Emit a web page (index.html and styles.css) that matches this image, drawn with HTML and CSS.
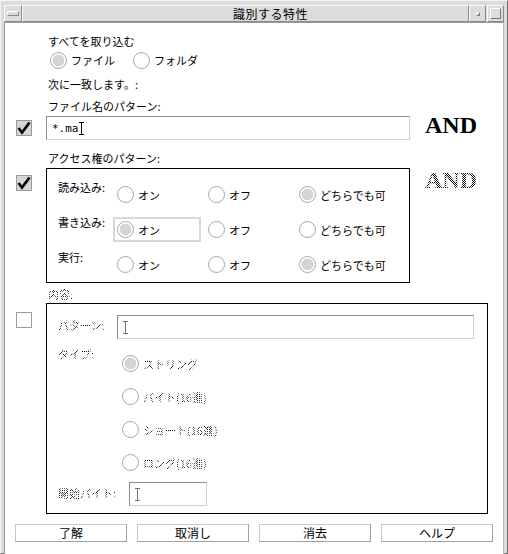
FILE: index.html
```html
<!DOCTYPE html>
<html lang="ja">
<head>
    <meta charset="UTF-8">
    <title>識別する特性</title>
    <link rel="stylesheet" href="styles.css">
</head>
<body>
    <div class="window">

        <!-- title bar -->
        <div class="titlebar">
            <div class="tb-btn menu-btn"><span class="menu-bar"></span></div>
            <div class="title">識別する特性</div>
            <div class="tb-btn min-btn"><span class="min-dot"></span></div>
            <div class="tb-btn max-btn"><span class="max-box"></span></div>
        </div>

        <div class="client">

            <div class="lbl first">すべてを取り込む</div>
            <div class="top-radios">
                <span class="opt wide"><span class="radio on"></span>ファイル</span>
                <span class="opt"><span class="radio"></span>フォルダ</span>
            </div>
            <div class="lbl gap7">次に一致します。:</div>
            <div class="lbl gap6">ファイル名のパターン:</div>

            <!-- file name pattern -->
            <div class="line name-line">
                <div class="gutter"><span class="check on"></span></div>
                <div class="field name-field">*.ma<span class="ibeam"></span></div>
                <span class="and">AND</span>
            </div>

            <div class="lbl gap10">アクセス権のパターン:</div>

            <!-- access rights -->
            <div class="line access-line">
                <div class="gutter"><span class="check on"></span></div>
                <div class="box access-box">
                    <div class="arow">
                        <div class="alabel">読み込み:</div>
                        <span class="cell"><span class="radio"></span>オン</span>
                        <span class="cell"><span class="radio"></span>オフ</span>
                        <span class="cell"><span class="radio on"></span>どちらでも可</span>
                    </div>
                    <div class="arow">
                        <div class="alabel">書き込み:</div>
                        <span class="cell focus"><span class="radio on"></span>オン</span>
                        <span class="cell"><span class="radio"></span>オフ</span>
                        <span class="cell"><span class="radio"></span>どちらでも可</span>
                    </div>
                    <div class="arow">
                        <div class="alabel">実行:</div>
                        <span class="cell"><span class="radio"></span>オン</span>
                        <span class="cell"><span class="radio"></span>オフ</span>
                        <span class="cell"><span class="radio on"></span>どちらでも可</span>
                    </div>
                </div>
                <span class="and dis">AND</span>
            </div>

            <div class="lbl gap3"><span class="dis">内容:</span></div>

            <!-- content (disabled) -->
            <div class="line content-line">
                <div class="gutter"><span class="check"></span></div>
                <div class="box content-box">
                    <div class="crow">
                        <div class="clabel"><span class="dis">パターン:</span></div>
                        <div class="field pattern-field"><span class="ibeam dim"></span></div>
                    </div>
                    <div class="crow type-row">
                        <div class="clabel"><span class="dis">タイプ:</span></div>
                        <div class="type-list">
                            <span class="opt"><span class="radio on"></span><span class="dis">ストリング</span></span>
                            <span class="opt"><span class="radio"></span><span class="dis">バイト(16進)</span></span>
                            <span class="opt"><span class="radio"></span><span class="dis">ショート(16進)</span></span>
                            <span class="opt"><span class="radio"></span><span class="dis">ロング(16進)</span></span>
                        </div>
                    </div>
                    <div class="crow start-row">
                        <div class="clabel wide"><span class="dis">開始バイト:</span></div>
                        <div class="field start-field"><span class="ibeam dim"></span></div>
                    </div>
                </div>
            </div>

            <!-- buttons -->
            <div class="buttons">
                <button>了解</button>
                <button>取消し</button>
                <button>消去</button>
                <button>ヘルプ</button>
            </div>
        </div>
    </div>
</body>
</html>
```

FILE: styles.css
```css
body {
    margin: 0;
    background: #dcdcdc;
    font-family: "Noto Sans CJK JP", "DejaVu Sans", sans-serif;
    font-size: 11px;
    color: #000;
}

.window {
    width: 508px;
    height: 554px;
    box-sizing: border-box;
    border: 1px solid;
    border-color: #f4f4f4 #6e6e6e #6e6e6e #f4f4f4;
    padding: 4px 3px 3px 3px;
    background: #dcdcdc;
}

/* title bar */
.titlebar {
    display: flex;
    height: 17px;
}

.tb-btn {
    box-sizing: border-box;
    height: 17px;
    border: 1px solid;
    border-color: #fafafa #8a8a8a #8a8a8a #fafafa;
    display: flex;
    align-items: center;
    justify-content: center;
}

.menu-btn {
    width: 18px;
}

.menu-bar {
    width: 10px;
    height: 3px;
    border: 1px solid;
    border-color: #fff #888 #888 #fff;
}

.title {
    flex: 1;
    box-sizing: border-box;
    height: 17px;
    border: 1px solid;
    border-color: #fafafa #8a8a8a #8a8a8a #fafafa;
    text-align: center;
    padding-left: 50px;
    font-size: 12px;
    line-height: 15px;
    letter-spacing: 0.5px;
}

.min-btn {
    width: 17px;
}

.min-dot {
    width: 2px;
    height: 2px;
    border: 1px solid;
    border-color: #fff #777 #777 #fff;
}

.max-btn {
    width: 17px;
    margin-left: 1px;
}

.max-box {
    width: 9px;
    height: 9px;
    border: 1px solid;
    border-color: #fff #777 #777 #fff;
}

/* client area */
.client {
    height: 524px;
    border-top: 1px solid #9a9a9a;
    border-left: 1px solid #9a9a9a;
    border-right: 1px solid #b8b8b8;
    background: #fff;
    padding-top: 10px;
    box-sizing: content-box;
}

.lbl {
    height: 16px;
    line-height: 16px;
    padding-left: 43px;
}

.gap7 { margin-top: 7px; }
.gap6 { margin-top: 6px; }
.gap10 { margin-top: 10px; }
.gap3 { margin-top: 3px; }

.top-radios {
    display: flex;
    height: 18px;
    margin-top: 2px;
    padding-left: 45px;
    align-items: center;
}

.opt {
    display: flex;
    align-items: center;
    height: 17px;
    white-space: nowrap;
}

.top-radios .opt.wide {
    width: 83px;
}

.radio {
    flex: none;
    width: 15px;
    height: 15px;
    border: 1px solid #a6a6a6;
    border-radius: 50%;
    margin-right: 4px;
    background: #fff;
}

.radio.on {
    background: radial-gradient(circle, #d4d4d4 0 5.5px, #fff 6.2px);
}

/* rows with a checkbox gutter */
.line {
    display: flex;
    align-items: flex-start;
}

.gutter {
    width: 41px;
    flex: none;
}

.check {
    display: block;
    box-sizing: border-box;
    width: 16px;
    height: 16px;
    margin-left: 11px;
    border: 1px solid #9a9a9a;
    background: #fff;
}

.check.on {
    background: #d6d6d6 url("data:image/svg+xml,%3Csvg xmlns='http://www.w3.org/2000/svg' width='14' height='14'%3E%3Cpath d='M1.5 7 L5 11.5 L12.5 1.5' fill='none' stroke='black' stroke-width='2.6'/%3E%3C/svg%3E") center / 14px 14px no-repeat;
}

.name-line {
    margin-top: 2px;
    height: 24px;
}

.name-line .check {
    margin-top: 4px;
}

.field {
    box-sizing: border-box;
    height: 24px;
    border: 1px solid;
    border-color: #8c8c8c #d0d0d0 #d0d0d0 #8c8c8c;
    background: #fff;
    display: flex;
    align-items: center;
    padding-left: 5px;
}

.name-field {
    width: 364px;
    font-family: "DejaVu Sans Mono", monospace;
    font-size: 11px;
}

.ibeam {
    display: inline-block;
    width: 5px;
    height: 13px;
    background:
        linear-gradient(#000, #000) center / 1px 100% no-repeat,
        linear-gradient(#000, #000) top / 5px 1px no-repeat,
        linear-gradient(#000, #000) bottom / 5px 1px no-repeat;
}

.ibeam.dim {
    opacity: 0.55;
}

.and {
    font-family: "Liberation Serif", serif;
    font-weight: bold;
    font-size: 24px;
    line-height: 24px;
    margin-left: 15px;
    margin-top: -3px;
}

.and.dis {
    margin-top: 0;
}

/* stippled disabled text */
.dis {
    color: transparent;
    background: repeating-conic-gradient(#000 0 25%, #fff0 0 50%) 0 0 / 2px 2px;
    -webkit-background-clip: text;
    background-clip: text;
}

/* access rights box */
.access-line {
    margin-top: 2px;
}

.access-line .check {
    margin-top: 7px;
}

.box {
    box-sizing: border-box;
    border: 1px solid #000;
}

.access-box {
    width: 364px;
    height: 115px;
    padding: 8px 0 0 11px;
}

.arow {
    display: flex;
    align-items: flex-start;
    height: 35px;
}

.alabel {
    width: 55px;
    flex: none;
    line-height: 16px;
    padding-top: 2px;
}

.cell {
    box-sizing: border-box;
    display: flex;
    align-items: center;
    flex: none;
    width: 88px;
    height: 25px;
    margin-top: 5px;
    margin-right: 3px;
    padding-left: 2px;
    border: 2px solid transparent;
    white-space: nowrap;
}

.cell:last-child {
    width: auto;
    padding-right: 4px;
}

.cell.focus {
    border-color: #d8d8d8;
}

/* content box */
.content-line {
    margin-top: 1px;
}

.content-line .check {
    margin-top: 9px;
}

.content-box {
    width: 442px;
    padding: 11px 0 7px 11px;
}

.crow {
    display: flex;
    align-items: flex-start;
}

.clabel {
    width: 59px;
    flex: none;
    line-height: 16px;
    margin-top: 2px;
}

.clabel.wide {
    width: 71px;
    margin-top: 3px;
}

.pattern-field {
    width: 357px;
}

.type-row {
    margin-top: 7px;
}

.clabel + .type-list {
    margin-top: 9px;
    margin-left: 5px;
}

.type-list {
    display: flex;
    flex-direction: column;
    gap: 16px;
}

.type-row .clabel {
    margin-top: 0;
}

.start-row {
    margin-top: 11px;
}

.start-field {
    width: 78px;
}

/* bottom buttons */
.buttons {
    display: flex;
    gap: 10px;
    margin-top: 10px;
    padding-left: 10px;
}

button {
    box-sizing: border-box;
    width: 112px;
    height: 18px;
    padding: 0;
    background: #fff;
    border: 1px solid;
    border-color: #c8c8c8 #a0a0a0 #a0a0a0 #c8c8c8;
    font-family: "Noto Sans CJK JP", "DejaVu Sans", sans-serif;
    font-size: 12px;
    line-height: 16px;
    color: #000;
}
```
